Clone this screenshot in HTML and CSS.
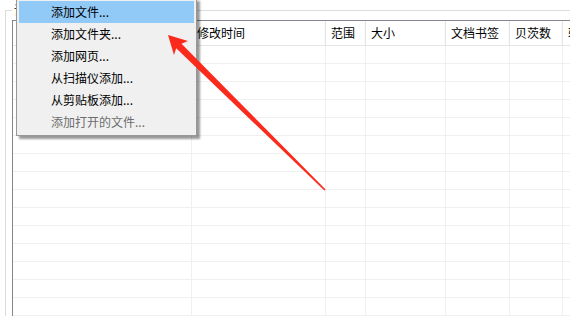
FILE: index.html
```html
<!DOCTYPE html>
<html lang="zh-CN">
<head>
  <meta charset="UTF-8">
  <title>添加文件</title>
  <link rel="stylesheet" href="styles.css">
</head>
<body>
  <div class="groupbox">
    <span class="groupLabel">详细信息</span>
    <div class="listview">
      <div class="row header">
        <div class="cell">名称</div>
        <div class="cell">修改时间</div>
        <div class="cell">范围</div>
        <div class="cell">大小</div>
        <div class="cell">文档书签</div>
        <div class="cell">贝茨数</div>
        <div class="cell">转换</div>
      </div>
      <div class="row"><div class="cell"></div><div class="cell"></div><div class="cell"></div><div class="cell"></div><div class="cell"></div><div class="cell"></div><div class="cell"></div></div>
      <div class="row"><div class="cell"></div><div class="cell"></div><div class="cell"></div><div class="cell"></div><div class="cell"></div><div class="cell"></div><div class="cell"></div></div>
      <div class="row"><div class="cell"></div><div class="cell"></div><div class="cell"></div><div class="cell"></div><div class="cell"></div><div class="cell"></div><div class="cell"></div></div>
      <div class="row"><div class="cell"></div><div class="cell"></div><div class="cell"></div><div class="cell"></div><div class="cell"></div><div class="cell"></div><div class="cell"></div></div>
      <div class="row"><div class="cell"></div><div class="cell"></div><div class="cell"></div><div class="cell"></div><div class="cell"></div><div class="cell"></div><div class="cell"></div></div>
      <div class="row"><div class="cell"></div><div class="cell"></div><div class="cell"></div><div class="cell"></div><div class="cell"></div><div class="cell"></div><div class="cell"></div></div>
      <div class="row"><div class="cell"></div><div class="cell"></div><div class="cell"></div><div class="cell"></div><div class="cell"></div><div class="cell"></div><div class="cell"></div></div>
      <div class="row"><div class="cell"></div><div class="cell"></div><div class="cell"></div><div class="cell"></div><div class="cell"></div><div class="cell"></div><div class="cell"></div></div>
      <div class="row"><div class="cell"></div><div class="cell"></div><div class="cell"></div><div class="cell"></div><div class="cell"></div><div class="cell"></div><div class="cell"></div></div>
      <div class="row"><div class="cell"></div><div class="cell"></div><div class="cell"></div><div class="cell"></div><div class="cell"></div><div class="cell"></div><div class="cell"></div></div>
      <div class="row"><div class="cell"></div><div class="cell"></div><div class="cell"></div><div class="cell"></div><div class="cell"></div><div class="cell"></div><div class="cell"></div></div>
      <div class="row"><div class="cell"></div><div class="cell"></div><div class="cell"></div><div class="cell"></div><div class="cell"></div><div class="cell"></div><div class="cell"></div></div>
      <div class="row"><div class="cell"></div><div class="cell"></div><div class="cell"></div><div class="cell"></div><div class="cell"></div><div class="cell"></div><div class="cell"></div></div>
      <div class="row"><div class="cell"></div><div class="cell"></div><div class="cell"></div><div class="cell"></div><div class="cell"></div><div class="cell"></div><div class="cell"></div></div>
      <div class="row"><div class="cell"></div><div class="cell"></div><div class="cell"></div><div class="cell"></div><div class="cell"></div><div class="cell"></div><div class="cell"></div></div>
    </div>
  </div>

  <!-- menu rozwijane nad listą -->
  <ul class="menu">
    <li class="menuItem active">添加文件...</li>
    <li class="menuItem">添加文件夹...</li>
    <li class="menuItem">添加网页...</li>
    <li class="menuItem">从扫描仪添加...</li>
    <li class="menuItem">从剪贴板添加...</li>
    <li class="menuItem disabled">添加打开的文件...</li>
  </ul>

  <svg class="arrow" width="570" height="316" viewBox="0 0 570 316">
    <polygon fill="#fa2a1c" points="168,35 188,41 181.5,43.8 325.6,189.4 324.4,190.6 176.2,48.3 174,55"/>
  </svg>
</body>
</html>
```

FILE: styles.css
```css
* {
  margin: 0;
  padding: 0;
  box-sizing: border-box;
}

body {
  width: 570px;
  height: 316px;
  overflow: hidden;
  background-color: #fff;
  font-family: "Noto Sans CJK SC", "Liberation Sans", sans-serif;
  font-size: 12px;
  color: #000;
  position: relative;
}

.groupbox {
  position: relative;
  margin: 10px 0 0 5px;
  height: 306px;
  border-left: 1px solid #dcdcdc;
  border-top: 1px solid #dcdcdc;
  padding: 9px 0 0 6px;
}

.groupLabel {
  position: absolute;
  left: 6px;
  top: -7px;
  padding: 0 2px;
  background-color: #fff;
  line-height: 12px;
}

.listview {
  border-left: 1px solid #828790;
  border-top: 1px solid #828790;
  height: 300px;
  overflow: hidden;
}

.row {
  display: grid;
  grid-template-columns: 179px 134px 40px 80px 64px 53px 60px;
  height: 18px;
  border-bottom: 1px solid #f0f0f0;
}

.row .cell {
  border-right: 1px solid #f0f0f0;
}

.header {
  height: 25px;
  border-bottom: 1px solid #e5e5e5;
}

.header .cell {
  padding-left: 5px;
  line-height: 24px;
  border-right: 1px solid #e5e5e5;
  box-shadow: inset -1px 0 0 #fafafa;
  white-space: nowrap;
  overflow: hidden;
}

.menu {
  position: absolute;
  left: 16px;
  top: -2px;
  width: 181px;
  padding: 2px;
  list-style: none;
  background-color: #f0f0f0;
  border: 1px solid #979797;
  box-shadow: 3px 3px 2px rgba(0, 0, 0, 0.4);
}

.menuItem {
  height: 22px;
  line-height: 22px;
  padding-left: 32px;
  white-space: nowrap;
}

.menuItem.active {
  background-color: #91c9f7;
}

.menuItem.disabled {
  color: #6d6d6d;
}

.arrow {
  position: absolute;
  left: 0;
  top: 0;
  pointer-events: none;
}
```
